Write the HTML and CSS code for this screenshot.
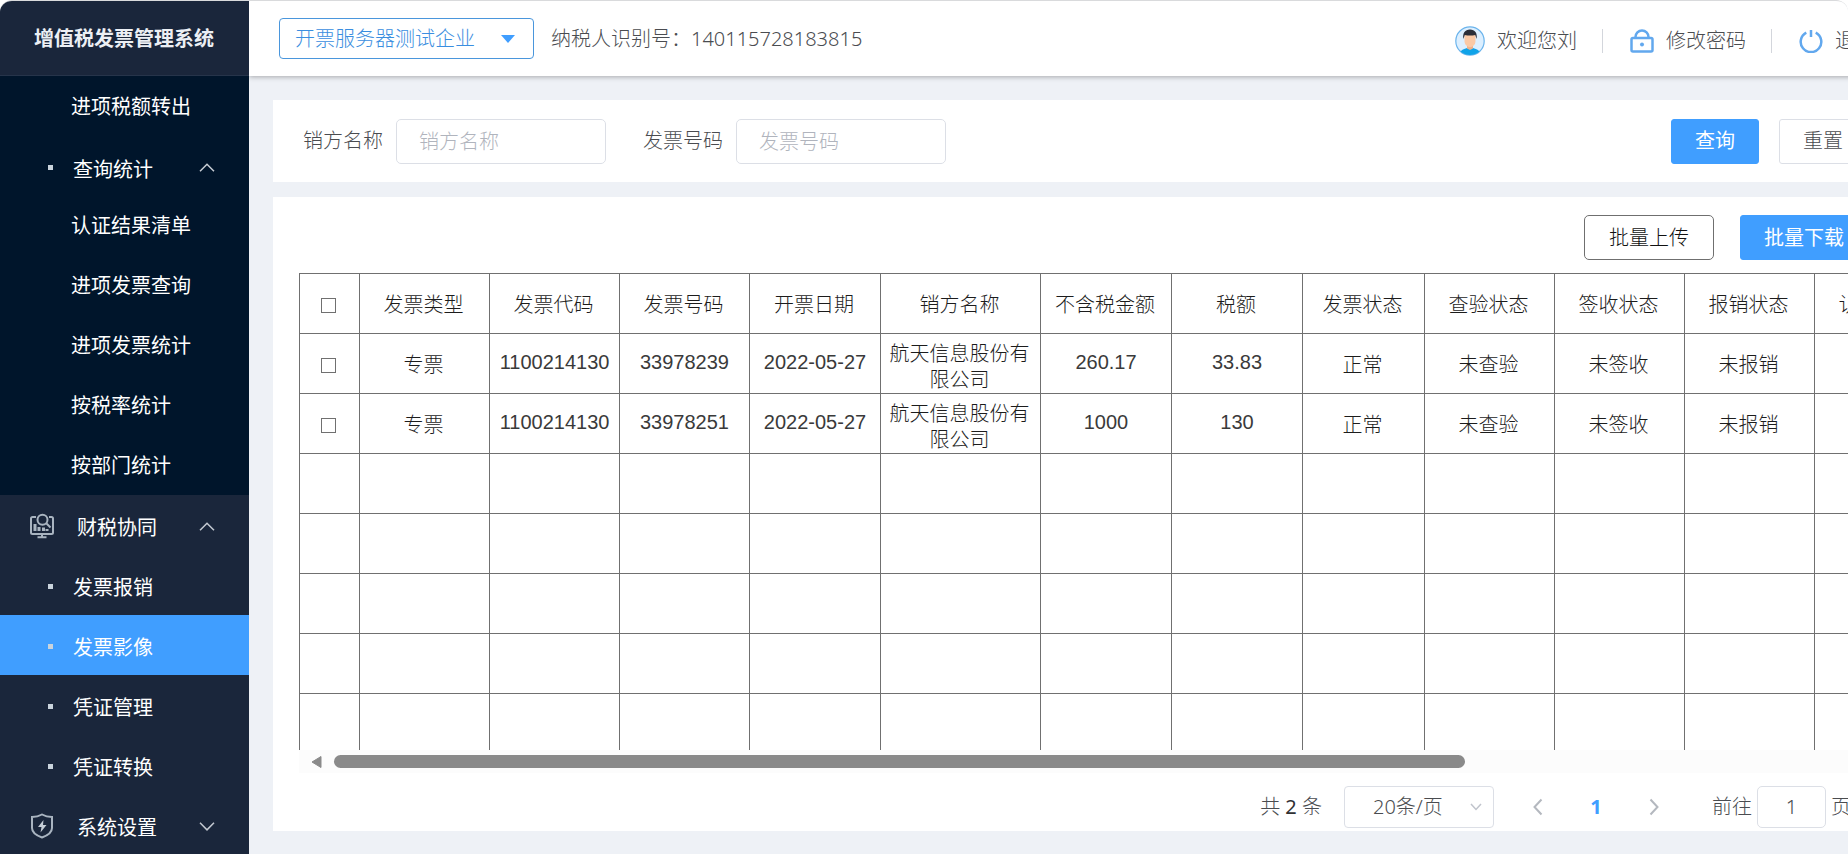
FILE: index.html
```html
<!DOCTYPE html>
<html lang="zh-CN">
<head>
<meta charset="utf-8">
<title>增值税发票管理系统</title>
<link rel="stylesheet" href="styles.css">
</head>
<body>
<div class="app">
  <aside class="sidebar">
    <h1 class="brand">增值税发票管理系统</h1>
    <nav class="menu">
      <div class="menu-dark">
        <a class="leaf" href="#">进项税额转出</a>
        <a class="item tall" href="#"><i class="dot"></i><span>查询统计</span>
          <svg class="chev" viewBox="0 0 16 9"><path d="M1 8.3 8 1.2l7 7.1"/></svg></a>
        <a class="leaf" href="#">认证结果清单</a>
        <a class="leaf" href="#">进项发票查询</a>
        <a class="leaf" href="#">进项发票统计</a>
        <a class="leaf" href="#">按税率统计</a>
        <a class="leaf" href="#">按部门统计</a>
      </div>
      <a class="group" href="#">
        <svg class="gicon" viewBox="0 0 26 26"><path d="M7 4H3.500a1.500 1.500 0 0 0-1.500 1.500V19.500A1.500 1.500 0 0 0 3.500 21h19a1.500 1.500 0 0 0 1.500-1.500V5.500A1.500 1.500 0 0 0 22.500 4H20"/><circle cx="13.500" cy="6.800" r="5"/><path d="m17.500 10.500 4 4"/><path class="bars" d="M6 11v7M10 14v4M14.500 14.500V18M18 16v2"/><path d="M13 21v3M8.500 24.300h9"/></svg>
        <span>财税协同</span>
        <svg class="chev" viewBox="0 0 16 9"><path d="M1 8.300 8 1.200l7 7.100"/></svg></a>
      <a class="item" href="#"><i class="dot"></i><span>发票报销</span></a>
      <a class="item active" href="#"><i class="dot"></i><span>发票影像</span></a>
      <a class="item" href="#"><i class="dot"></i><span>凭证管理</span></a>
      <a class="item" href="#"><i class="dot"></i><span>凭证转换</span></a>
      <a class="group" href="#">
        <svg class="gicon" viewBox="0 0 26 26"><path d="M13 1.500c3 1.700 6.500 2.500 10 2.500v11c0 5-4.500 7.500-10 9.500C7.500 22.500 3 20 3 15V4c3.500 0 7-.8 10-2.500z"/><path class="solid" d="M14.500 7 9 14h3.500l-1 5.500L17.500 12H14z"/></svg>
        <span>系统设置</span>
        <svg class="chev" viewBox="0 0 16 9"><path d="m1 .8 7 7.100 7-7.100"/></svg></a>
    </nav>
  </aside>

  <div class="page">
    <header class="topbar">
      <button class="company" type="button"><span>开票服务器测试企业</span><i class="caret"></i></button>
      <p class="taxno">纳税人识别号：140115728183815</p>
      <div class="user">
        <a class="ulink" href="#">
          <svg class="avatar" viewBox="0 0 30 30"><defs><clipPath id="face"><circle cx="15" cy="15" r="14"/></clipPath></defs><circle cx="15" cy="15" r="14.200" fill="#dcefff" stroke="#6bb4ec" stroke-width="1.200"/><g clip-path="url(#face)"><path d="M4 30c0-5 4-7 8-8h6c4 1 8 3 8 8z" fill="#10a3e8"/><path d="M12 18h6v4.500l-3 1.500-3-1.500z" fill="#eeb28c"/></g><path d="M9.500 9h11v6c0 3.500-2.500 6-5.500 6s-5.500-2.500-5.500-6z" fill="#fbc9a5"/><path d="M8.300 13C7.500 7 10 3.500 15 3.500S22.500 7 21.700 13l-1.500-4c-3 .8-7 .8-10.400 0z" fill="#2b2e38"/></svg>
          <span>欢迎您刘</span></a>
        <i class="sep"></i>
        <a class="ulink" href="#">
          <svg class="uicon" viewBox="0 0 24 24"><rect x="1.500" y="9" width="21" height="13.500" rx="1.500"/><path d="M5.500 9V8a6.500 6.500 0 0 1 13 0v1"/><circle class="pin" cx="12" cy="15.500" r="2"/></svg>
          <span>修改密码</span></a>
        <i class="sep"></i>
        <a class="ulink" href="#">
          <svg class="uicon" viewBox="0 0 24 24"><path d="M7.300 3.600a10.300 10.300 0 1 0 9.400 0M12 1v7"/></svg>
          <span>退出</span></a>
      </div>
    </header>

    <main class="content">
      <form class="panel search">
        <label for="seller">销方名称</label>
        <input id="seller" type="text" placeholder="销方名称">
        <label for="number">发票号码</label>
        <input id="number" type="text" placeholder="发票号码">
        <button class="btn primary query" type="button">查询</button>
        <button class="btn plain" type="button">重置</button>
      </form>

      <section class="panel list">
        <div class="tools">
          <button class="btn outline" type="button">批量上传</button>
          <button class="btn primary" type="button">批量下载</button>
        </div>
        <div class="grid">
          <table>
            <colgroup><col class="c60"><col class="c130"><col class="c130"><col class="c130"><col class="c131"><col class="c160"><col class="c131"><col class="c131"><col class="c122"><col class="c130"><col class="c130"><col class="c130"><col class="c130"></colgroup>
            <thead>
              <tr><th><input type="checkbox" aria-label="全选"></th><th>发票类型</th><th>发票代码</th><th>发票号码</th><th>开票日期</th><th>销方名称</th><th>不含税金额</th><th>税额</th><th>发票状态</th><th>查验状态</th><th>签收状态</th><th>报销状态</th><th>认证状态</th></tr>
            </thead>
            <tbody>
              <tr><td><input type="checkbox" aria-label="选择 33978239"></td><td>专票</td><td class="num">1100214130</td><td class="num">33978239</td><td class="num">2022-05-27</td><td class="name">航天信息股份有限公司</td><td class="num">260.17</td><td class="num">33.83</td><td>正常</td><td>未查验</td><td>未签收</td><td>未报销</td><td></td></tr>
              <tr><td><input type="checkbox" aria-label="选择 33978251"></td><td>专票</td><td class="num">1100214130</td><td class="num">33978251</td><td class="num">2022-05-27</td><td class="name">航天信息股份有限公司</td><td class="num">1000</td><td class="num">130</td><td>正常</td><td>未查验</td><td>未签收</td><td>未报销</td><td></td></tr>
              <tr><td></td><td></td><td></td><td></td><td></td><td></td><td></td><td></td><td></td><td></td><td></td><td></td><td></td></tr>
              <tr><td></td><td></td><td></td><td></td><td></td><td></td><td></td><td></td><td></td><td></td><td></td><td></td><td></td></tr>
              <tr><td></td><td></td><td></td><td></td><td></td><td></td><td></td><td></td><td></td><td></td><td></td><td></td><td></td></tr>
              <tr><td></td><td></td><td></td><td></td><td></td><td></td><td></td><td></td><td></td><td></td><td></td><td></td><td></td></tr>
              <tr><td></td><td></td><td></td><td></td><td></td><td></td><td></td><td></td><td></td><td></td><td></td><td></td><td></td></tr>
            </tbody>
          </table>
        </div>
        <div class="hscroll"><svg class="arrow" viewBox="0 0 11 14"><path d="M10 1.500v11L1 7z"/></svg><div class="thumb"></div></div>
        <div class="pager">
          <p class="total">共 <b>2</b> 条</p>
          <div class="size"><select aria-label="每页条数"><option>20条/页</option></select>
            <svg class="down" viewBox="0 0 12 8"><path d="m1 1 5 5.500L11 1"/></svg></div>
          <button class="step" type="button" aria-label="上一页"><svg viewBox="0 0 10 18"><path d="M8.500 1.500 1.500 9l7 7.500"/></svg></button>
          <button class="current" type="button">1</button>
          <button class="step" type="button" aria-label="下一页"><svg viewBox="0 0 10 18"><path d="m1.500 1.500 7 7.500-7 7.500"/></svg></button>
          <label class="goto" for="page">前往</label><input id="page" type="text" value="1"><span>页</span>
        </div>
      </section>
    </main>
  </div>
</div>
</body>
</html>
```

FILE: styles.css
```css
* { box-sizing: border-box; }

body {
  margin: 0;
  font: 20px/24px "Noto Sans", "Noto Sans CJK SC", sans-serif;
  font-weight: 300;
  color: #4a4c50;
  background: #fff;
}

a { color: inherit; text-decoration: none; }
button, input, select { font: inherit; color: inherit; }
p, h1 { margin: 0; }
svg { flex: none; fill: none; }

.app {
  display: flex;
  height: 100vh;
  border-top: 1px solid #d9dadc;
  border-bottom: 2px solid #fff;
  border-radius: 12px 12px 0 0;
  overflow: hidden;
}

/* Sidebar */
.sidebar {
  flex: none;
  width: 249px;
  background: #1a263b;
  color: #fff;
  font-weight: 400;
  overflow: hidden;
}
.brand {
  height: 75px;
  padding-right: 1px;
  font-size: 20px;
  line-height: 75px;
  font-weight: 700;
  text-align: center;
  color: #eceff4;
  border-bottom: 1px solid #26344a;
}
.menu-dark { background: #00152b; }
.leaf, .item, .group {
  display: flex;
  align-items: center;
  height: 60px;
  padding-top: 2px;
}
.leaf { padding-left: 71px; }
.item { padding-left: 48px; }
.item.tall { height: 59px; padding-top: 4px; }
.item span, .group span { padding-top: 4px; }
.item span { margin-left: 20px; }
.active { background: #409eff; }
.dot { width: 5px; height: 5px; background: #c9d3dc; }
.group { padding-left: 29px; }
.group .gicon { width: 26px; height: 26px; }
.group span { margin-left: 22px; }
.gicon { stroke: #a9b4c0; stroke-width: 2; }
.gicon .bars { stroke-width: 3; }
.gicon .solid { fill: #c5cdd6; stroke: none; }
.chev {
  width: 16px;
  height: 9px;
  margin-left: auto;
  margin-right: 34px;
  stroke: #c3c9d1;
  stroke-width: 1.5;
}

/* Page */
.page {
  flex: 1;
  min-width: 0;
  display: flex;
  flex-direction: column;
  background: #eef1f6;
  overflow: hidden;
}
.topbar {
  flex: none;
  display: flex;
  align-items: center;
  height: 75px;
  margin-right: -56px;
  padding: 0 29px 0 30px;
  background: #fff;
  box-shadow: 0 1px 5px rgba(0, 0, 0, .3);
  z-index: 1;
}
.company {
  display: flex;
  align-items: center;
  gap: 26px;
  height: 41px;
  padding: 0 18px 0 15px;
  border: 1px solid #4a96dc;
  border-radius: 4px;
  background: #fff;
  color: #3a8ee0;
}
.caret {
  border: 7px solid transparent;
  border-top: 8px solid #409eff;
  border-bottom: 0;
}
.taxno { margin-left: 17px; }
.user { display: flex; align-items: center; margin-left: auto; padding-top: 4px; }
.ulink { display: flex; align-items: center; }
.avatar { width: 30px; height: 30px; margin-right: 12px; }
.uicon {
  width: 24px;
  height: 24px;
  margin-right: 12px;
  stroke: #62a8ee;
  stroke-width: 2.5;
}
.uicon .pin { fill: #62a8ee; stroke: none; }
.sep { width: 1px; height: 24px; margin: 0 27px 0 25px; background: #d3d6dc; }

.content {
  flex: 1;
  min-height: 0;
  display: flex;
  flex-direction: column;
  gap: 15px;
  margin-right: -42px;
  padding: 24px 0 23px 24px;
}
.panel { background: #fff; }

.search {
  display: flex;
  align-items: center;
  height: 82px;
  padding: 0 23px 0 30px;
}
.search label { margin-right: 13px; }
.search input {
  width: 210px;
  height: 45px;
  margin-right: 37px;
  padding: 0 22px;
  border: 1px solid #dcdfe6;
  border-radius: 5px;
  background: #fff;
}
.search input::placeholder { color: #b0b4bd; opacity: 1; }

.btn {
  height: 45px;
  padding: 0 23px;
  border: 1px solid #dcdfe6;
  border-radius: 3px;
  background: #fff;
}
.primary { background: #409eff; border-color: #409eff; color: #fff; font-weight: 400; }
.outline { padding: 0 24px; border-color: #6f6f6f; border-radius: 5px; color: #111; }
.query { margin-left: auto; margin-right: 20px; }

.list {
  flex: 1;
  min-height: 0;
  display: flex;
  flex-direction: column;
  padding: 18px 0 0 26px;
}
.tools {
  display: flex;
  justify-content: flex-end;
  gap: 26px;
  padding: 0 22px 13px 0;
}

/* Invoice table */
.grid { flex: 1; min-height: 0; overflow: hidden; }
table {
  width: 1645px;
  table-layout: fixed;
  border-collapse: collapse;
  color: #1c1c1c;
}
.c60 { width: 60px; }
.c122 { width: 122px; }
.c130 { width: 130px; }
.c131 { width: 131px; }
.c160 { width: 160px; }
th, td {
  height: 60px;
  padding: 3px 2px 0 0;
  border: 1px solid #707070;
  font-weight: inherit;
  text-align: center;
}
.num {
  padding: 0 0 3px;
  font-family: "Liberation Sans", sans-serif;
  color: #3a3a3a;
}
.name { padding: 6px 8px 0 6px; line-height: 26px; }
th input, td input {
  appearance: none;
  display: block;
  width: 15px;
  height: 15px;
  margin: 0 auto;
  border: 1px solid #707070;
  background: #fff;
}

.hscroll {
  display: flex;
  align-items: center;
  gap: 12px;
  height: 23px;
  padding-left: 12px;
  background: #fcfcfc;
}
.arrow { width: 11px; height: 14px; fill: #8a8a8a; stroke: #8a8a8a; }
.thumb { width: 71.6%; height: 13px; border-radius: 7px; background: #8a8a8a; }

/* Pagination */
.pager {
  display: flex;
  align-items: center;
  justify-content: flex-end;
  height: 58px;
  padding: 9px 39px 0 0;
}
.total b { font-weight: 400; color: #303133; }
.size { display: flex; align-items: center; margin-left: 22px; }
.size select {
  appearance: none;
  width: 150px;
  height: 42px;
  padding: 0 28px;
  border: 1px solid #dcdfe6;
  border-radius: 4px;
  background: #fff;
}
.size .down { width: 12px; height: 8px; margin-left: -24px; margin-right: 12px; stroke: #c0c4cc; stroke-width: 1.5; }
.step, .current {
  display: grid;
  place-items: center;
  width: 58px;
  padding: 0;
  border: 0;
  background: none;
}
.size + .step { margin-left: 15px; }
.step svg { width: 10px; height: 18px; stroke: #b4b8bf; stroke-width: 2; }
.current { color: #409eff; font-weight: 700; }
.goto { margin-left: 29px; }
.pager input {
  width: 69px;
  height: 42px;
  margin: 0 5px;
  border: 1px solid #dcdfe6;
  border-radius: 5px;
  text-align: center;
}
```
